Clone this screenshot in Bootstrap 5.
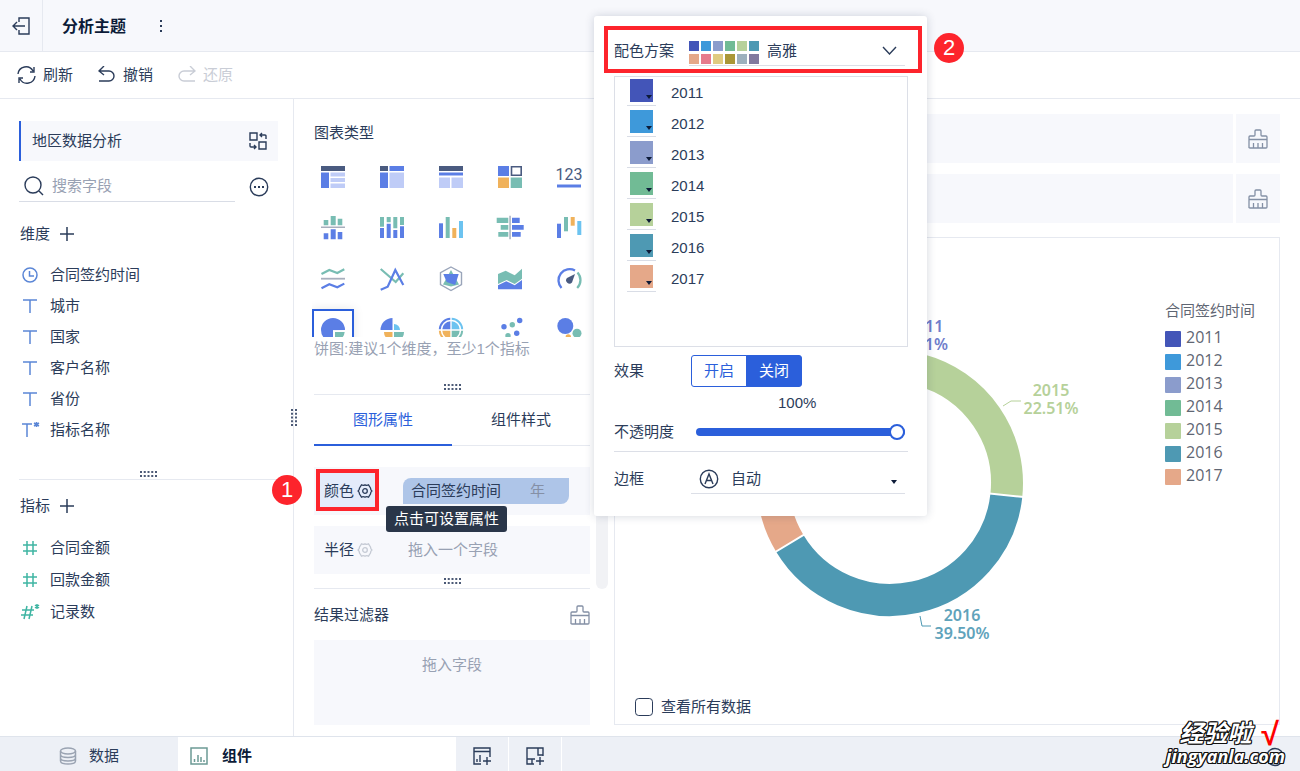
<!DOCTYPE html>
<html lang="zh-CN">
<head>
<meta charset="utf-8">
<meta name="viewport" content="width=device-width, initial-scale=1">
<title>分析主题</title>
<link href="https://cdn.jsdelivr.net/npm/bootstrap@5.3.0/dist/css/bootstrap.min.css" rel="stylesheet">
<style>
:root{--ink:#2b3c5a;--soft:#98a1b3;--line:#e6e9f0;--pale:#f7f8fc;--blue:#2b5fdb;--red:#fd242c}
body{font-family:"Liberation Sans","Noto Sans CJK SC",sans-serif;font-size:15px;line-height:24px;color:var(--ink);background:#fff}
svg{display:block;flex:none}
.ico{fill:none;stroke:currentColor;stroke-width:1.4}
.plain{border:0;background:none;padding:0;color:inherit;display:flex;align-items:center}
.topbar{height:52px;background:var(--pale);border-bottom:1px solid var(--line)}
.topbar .exit{width:43px;height:51px;border-right:1px solid var(--line)}
.topbar h1{font-size:16px;font-weight:700;color:#0c1b38;margin:0 0 0 19px;padding-top:2px}
.toolbar{height:47px;border-bottom:1px solid var(--line);padding-left:17px;gap:25px}
.toolbar .plain{gap:7px}
.toolbar .plain:disabled{color:#c9cdd6}
.side{width:294px;border-right:1px solid var(--line);padding:22px 15px 0 19px}
.dataset{height:40px;background:var(--pale);border-left:2px solid var(--blue);padding:0 11px 0 11px}
.search{height:31px;margin:10px 43px 0 0;border-bottom:1px solid #d9dde6;padding-left:4px}
.search input{border:0;outline:0;padding:0;width:100%;color:var(--ink);background:none}
.search input::placeholder{color:var(--soft)}
.more{right:9px;bottom:5px}
.section{height:32px;margin-top:16px;padding-left:1px;font-size:15px;font-weight:400;gap:10px}
.fields{margin:9px 0 0 3px;padding:0;list-style:none}
.fields li{height:31px;display:flex;align-items:center;gap:12px}
.fields.measures{margin-top:10px}
.fields.measures li{height:32px}
.splitter{border-bottom:1px solid var(--line);display:flex;justify-content:center}
.vgrip{left:291px;top:310px}
.conf{width:320px;padding:22px 24px 11px 20px}
.kinds{display:grid;grid-template-columns:repeat(5,42px);grid-auto-rows:42px;gap:9px 0;justify-content:space-between;margin:11px 0 0 -2px;height:181px;overflow:hidden}
.kinds .plain{justify-content:center}
.kinds .active{border:2px solid var(--blue);box-shadow:0 0 10px #0000001a}
.kinds text{font:16px Roboto,sans-serif;text-anchor:middle}
.tabs{height:51px}
.tabs .plain{flex:1;justify-content:center;border-bottom:1px solid var(--line)}
.tabs .active{color:var(--blue);border-bottom:2px solid var(--blue)}
.well{background:var(--pale)}
.prop{height:48px;padding-left:10px}
.prop .plain{gap:3px}
.hot{left:6px;top:6px;height:34px;width:55px;background:#e4ebfa}
.mark-box{border:4px solid var(--red);pointer-events:none}
.pill{width:166px;height:26px;margin-right:21px;padding:0 24px 0 8px;background:#aec5e8;border-radius:8px 0}
.tip{left:72px;top:39px;height:26px;padding:1px 8px 0;background:#2a3649;color:#fff;border-radius:3px;z-index:3;white-space:nowrap}
.num{width:30px;height:30px;border-radius:50%;background:var(--red);color:#fff;font-size:22px;line-height:30px;text-align:center;z-index:6}
.thumbbar{right:6px;top:200px;width:12px;height:290px;border-radius:6px;background:#f1f2f5}
.view{padding:15px 20px 11px 0}
.axis{height:49px}
.axis .plain{width:47px;justify-content:center;border-left:3px solid #fff;color:#8490a5}
.chart{border:1px solid var(--line);margin-top:14px}
.legend-list{width:114px;padding-top:61px;color:#5f6673}
.legend-list li{height:23px;display:flex;align-items:center;gap:5px;font:16px/23px "Open Sans",sans-serif}
.dot{width:16px;height:16px;border-radius:1px;margin-top:3px}
.pie text{font:600 16px "Noto Sans",sans-serif;text-anchor:middle}
.form-check-input{width:18px;height:18px;border:1px solid var(--ink);margin:0}
.popup{left:594px;top:16px;width:333px;height:500px;background:#fff;border-radius:3px;box-shadow:0 0 10px #1b2a4a30;padding:20px 19px 0 20px;z-index:4}
.lab{width:75px;flex:none}
.scheme{border-bottom:1px solid #dcdfe7;height:30px;margin-right:3px}
.sw{display:grid;grid-template-columns:repeat(6,10px);grid-auto-rows:10px;gap:3px 2px;padding-top:4px}
.popup select{appearance:none;border:0;background:none;color:inherit;padding:0;height:100%;outline:0;width:100%}
.down{right:8px;pointer-events:none}
.colors{margin-top:10px;height:271px;border:1px solid #dcdfe7;padding:0 12px}
.colors li{height:31px;display:flex;align-items:center;gap:15px}
.chip{width:29px;height:27px;border:0;border-bottom:1px solid #d9dde6;padding:0 3px 3px;background:none}
.chip span{display:block;height:23px;position:relative}
.chip span::after,.tri{content:"";position:absolute;right:1px;bottom:3px;border:3px solid transparent;border-top:4px solid #0d1b38;border-bottom:0}
.onoff .btn{--bs-btn-color:var(--blue);--bs-btn-border-color:var(--blue);--bs-btn-active-bg:var(--blue);--bs-btn-active-border-color:var(--blue);--bs-btn-active-color:#fff;height:32px;width:56px;padding:0;font-size:15px;line-height:29px;border-radius:3px}
.slide{appearance:none;width:209px;height:18px;margin:0;background:none}
.slide::-webkit-slider-runnable-track{height:8px;border-radius:4px;background:var(--blue)}
.slide::-webkit-slider-thumb{appearance:none;width:16px;height:16px;margin-top:-4px;border-radius:50%;background:#fff;border:2px solid var(--blue)}
.slide::-moz-range-track{height:8px;border-radius:4px;background:var(--blue)}
.slide::-moz-range-thumb{width:12px;height:12px;border-radius:50%;background:#fff;border:2px solid var(--blue)}
.foot{height:35px;background:#edf0f6;border-top:1px solid #dfe4ec}
.foot .plain{height:34px;padding-top:3px}
.foot .cell{width:53px;justify-content:center;border-right:1px solid #fff}
.stamp{right:15px;bottom:4px;color:#fff;font-weight:700;line-height:22px;font-style:italic;z-index:7;
text-shadow:1px 0 #111,-1px 0 #111,0 1px #111,0 -1px #111,1px 1px #111,-1px -1px #111,1px -1px #111,-1px 1px #111}
.stamp .zh{font-size:24px;display:flex;justify-content:flex-end;gap:8px;padding-right:8px}
.stamp .tick{color:#f00;text-shadow:none;font-size:32px}
.stamp .en{font:italic 700 18px/22px "Open Sans",sans-serif}
</style>
<script src="https://cdn.jsdelivr.net/npm/bootstrap@5.3.0/dist/js/bootstrap.bundle.min.js"></script>
</head>
<body class="d-flex flex-column min-vh-100 position-relative">

<svg width="0" height="0" class="position-absolute" aria-hidden="true">
  <symbol id="brush" viewBox="0 0 20 20"><path d="M1 19V8q0-1 1-1h4q1 0 1-1V2q0-1 1-1h4q1 0 1 1v4q0 1 1 1h4q1 0 1 1v10q0 1-1 1H2q-1 0-1-1M1 10.500h18M5.500 14v5M10 14v5M14.500 14v5" fill="none" stroke="currentColor" stroke-width="1.300"/></symbol>
  <symbol id="tee" viewBox="0 0 16 16"><path d="M1 2h14M8 2v13" fill="none" stroke="#5b86d6" stroke-width="1.500"/></symbol>
  <symbol id="hash" viewBox="0 0 16 16"><path d="M5 1v14M11 1v14M1 5h14M1 11h14" fill="none" stroke="#3fb5a3" stroke-width="1.500"/></symbol>
  <symbol id="plus" viewBox="0 0 14 14"><path d="M7 0v14M0 7h14" stroke="currentColor" stroke-width="1.500"/></symbol>
  <symbol id="gear" viewBox="0 0 16 16"><path d="M4.500 1.800q1.500 1 3.500 0 2 1 3.500 0L13.500 5q0 2 1.500 3-1.500 1-1.500 3l-2 3.200q-1.500-1-3.500 0-2-1-3.500 0L2.500 11Q2.500 9 1 8q1.500-1 1.500-3z" fill="none" stroke="currentColor" stroke-width="1.300" stroke-linejoin="round"/><circle cx="8" cy="8" r="2.300" fill="none" stroke="currentColor" stroke-width="1.300"/></symbol>
  <symbol id="grip" viewBox="0 0 17 6"><path d="M0 1h17M0 5h17" stroke="#4c5a76" stroke-width="2" stroke-dasharray="2 1.750"/></symbol>
</svg>

<header class="topbar d-flex align-items-center">
  <button class="plain exit justify-content-center" aria-label="退出"><svg class="ico" width="18" height="18"><path d="M7 5V1h10v16H7v-4M13 9H1M5 5 1 9l4 4"/></svg></button>
  <h1>分析主题</h1>
  <button class="plain ms-4 ps-2" aria-label="更多"><svg width="6" height="14" fill="currentColor"><path d="M2 1h2v2H2zM2 6h2v2H2zM2 11h2v2H2z"/></svg></button>
</header>

<div class="toolbar d-flex align-items-center">
  <button class="plain"><svg class="ico" width="19" height="18"><path d="M1 8a8 8 0 0 1 15-3M17 1v5h-4M18 10a8 8 0 0 1-15 3M2 17v-5h4"/></svg>刷新</button>
  <button class="plain"><svg class="ico" width="18" height="18"><path d="M6 0 1 5l5 4M1 5h10a5 5 0 0 1 0 10H1"/></svg>撤销</button>
  <button class="plain" disabled><svg class="ico" width="18" height="18"><path d="m12 0 5 5-5 4M17 5H6a5 5 0 0 0 0 10h11"/></svg>还原</button>
</div>

<main class="d-flex flex-grow-1 position-relative">
  <aside class="side">
    <div class="dataset d-flex align-items-center justify-content-between"><span>地区数据分析</span>
      <button class="plain" aria-label="切换"><svg class="ico" width="18" height="18"><path d="M1 1h7v7H1zM10 10h7v7h-7zM17 7V4q0-1-1-1h-5M13 1l-2 2 2 2M1 11v3q0 1 1 1h5M5 13l2 2-2 2"/></svg></button></div>
    <div class="d-flex position-relative">
      <label class="search d-flex align-items-center gap-2 flex-grow-1"><svg class="ico" width="21" height="20"><circle cx="10" cy="9" r="8"/><path d="m16 15 4 4"/></svg><input type="text" placeholder="搜索字段" aria-label="搜索字段"></label>
      <button class="plain position-absolute more" aria-label="筛选"><svg class="ico" width="20" height="20"><circle cx="10" cy="10" r="8.700"/><path d="M5 10h2M9 10h2M13 10h2" stroke-width="2"/></svg></button>
    </div>
    <h2 class="section d-flex align-items-center mb-0">维度<button class="plain" aria-label="添加维度"><svg width="14" height="14"><use href="#plus"/></svg></button></h2>
    <ul class="fields">
      <li><svg width="16" height="16" fill="none" stroke="#5b86d6" stroke-width="1.500"><circle cx="8" cy="8" r="7"/><path d="M7.500 4v5H12"/></svg>合同签约时间</li>
      <li><svg width="16" height="16"><use href="#tee"/></svg>城市</li>
      <li><svg width="16" height="16"><use href="#tee"/></svg>国家</li>
      <li><svg width="16" height="16"><use href="#tee"/></svg>客户名称</li>
      <li><svg width="16" height="16"><use href="#tee"/></svg>省份</li>
      <li><svg width="16" height="16" overflow="visible" fill="none" stroke="#5b86d6" stroke-width="1.500"><path d="M0 2h10M5 2v13M14.500 0v5M12 1l5 3M17 1l-5 3" /></svg>指标名称</li>
    </ul>
    <div class="splitter" style="height:9px;margin-top:26px"><svg width="17" height="6"><use href="#grip"/></svg></div>
    <h2 class="section d-flex align-items-center mb-0" style="margin-top:10px">指标<button class="plain" aria-label="添加指标"><svg width="14" height="14"><use href="#plus"/></svg></button></h2>
    <ul class="fields measures">
      <li><svg width="16" height="16"><use href="#hash"/></svg>合同金额</li>
      <li><svg width="16" height="16"><use href="#hash"/></svg>回款金额</li>
      <li><svg width="16" height="16" overflow="visible" fill="none" stroke="#3fb5a3" stroke-width="1.500"><path d="M5 2 2 15M10 2 7 15M0 6h12M-1 11h12M15 0v5M13 1l4 3M17 1l-4 3"/></svg>记录数</li>
    </ul>
  </aside>
  <svg class="vgrip position-absolute" width="6" height="17"><path d="M1 0v17M5 0v17" stroke="#4c5a76" stroke-width="2" stroke-dasharray="2 1.750"/></svg>

  <section class="conf d-flex flex-column position-relative flex-shrink-0">
    <div class="thumbbar position-absolute"></div>
    <div>图表类型</div>
    <div class="kinds">
      <button class="plain" aria-label="分组表"><svg width="28" height="28" viewBox="-2 -3 28 28"><path fill="#4a5b80" d="M0 0h24v5H0z"/><path fill="#5b7ee5" d="M0 6.500h8V22H0z"/><path fill="#bfccf7" d="M9.500 6.500H24v4H9.500zM9.500 12H24v4H9.500zM9.500 17.500H24V22H9.500z"/></svg></button>
      <button class="plain" aria-label="交叉表"><svg width="28" height="28" viewBox="-2 -3 28 28"><path fill="#4a5b80" d="M0 0h8v5H0z"/><path fill="#5b7ee5" d="M9.500 0H24v5H9.500zM0 6.500h8V22H0z"/><path fill="#bfccf7" d="M9.500 6.500H24V22H9.500z"/></svg></button>
      <button class="plain" aria-label="明细表"><svg width="28" height="28" viewBox="-2 -3 28 28"><path fill="#4a5b80" d="M0 0h24v5H0z"/><path fill="#5b7ee5" d="M0 6.500h24v3H0z"/><path fill="#bfccf7" d="M0 11.500h11V22H0zM12.500 11.500H24V22H12.500z"/></svg></button>
      <button class="plain" aria-label="颜色表格"><svg width="28" height="28" viewBox="-2 -3 28 28"><path fill="#5b7ee5" d="M0 0h11v10H0z"/><path fill="none" stroke="#4a5b80" stroke-width="1.600" d="M13.500.800h9.700v8.400h-9.700z"/><path fill="#f0b25b" d="M0 11.500h11V22H0z"/><path fill="#78bdb3" d="M12.700 11.500H24V22H12.700z"/></svg></button>
      <button class="plain" aria-label="指标卡"><svg width="28" height="28" viewBox="-2 -3 28 28"><text x="12" y="14" fill="#4a5b80">123</text><path fill="#5b7ee5" d="M0 18.500h24v3H0z"/></svg></button>

      <button class="plain" aria-label="堆积柱形图"><svg width="28" height="28" viewBox="-2 -3 28 28"><path fill="#78bdb3" d="M2.700 3h4.600v5.300H2.700zM9.700-1h5v9.300h-5zM16.700 1.700h4.600v6.600h-4.600z"/><path fill="#a8afbd" d="M0 9.500h24V11H0z"/><path fill="#5b7ee5" d="M2.700 16.300h4.600v6H2.700zM9.700 12.300h5v10h-5zM16.700 15h4.600v7.300h-4.600z"/></svg></button>
      <button class="plain" aria-label="百分比柱形图"><svg width="28" height="28" viewBox="-2 -3 28 28"><path fill="#78bdb3" d="M0 0h4v9.700H0zM6.700 0h4v5.200h-4zM13.300 0h4v11.300h-4zM20 0h4v8h-4z"/><path fill="#5b7ee5" d="M0 11h4v10H0zM6.700 6.700h4V21h-4zM13.300 13h4v8h-4zM20 9.300h4V21h-4z"/></svg></button>
      <button class="plain" aria-label="多系列柱形图"><svg width="28" height="28" viewBox="-2 -3 28 28"><path fill="#5b7ee5" d="M0 6.300h4V21H0z"/><path fill="#78bdb3" d="M6.700 0h4v21h-4z"/><path fill="#f0b25b" d="M13.300 11h4v10h-4z"/><path fill="#6cc3f0" d="M20 4h4v17h-4z"/></svg></button>
      <button class="plain" aria-label="对比条形图"><svg width="28" height="28" viewBox="-2 -3 28 28"><path fill="#78bdb3" d="M-1.300.700h11.600V6H-1.300zM2.700 8h7.600v4.700H2.700zM.300 15h10v4.700H.300z"/><path fill="#a8afbd" d="M11.300-1.300h1.500v23.600h-1.500z"/><path fill="#5b7ee5" d="M14 .700h7.700V6H14zM14 8h11.700v4.700H14zM14 15h8.700v4.700H14z"/></svg></button>
      <button class="plain" aria-label="瀑布图"><svg width="28" height="28" viewBox="-2 -3 28 28"><path fill="#5b7ee5" d="M0 6.700h4V21H0z"/><path fill="#78bdb3" d="M7 0h4v14.300H7z"/><path fill="#f0b25b" d="M13.700 0h4v8.700h-4z"/><path fill="#6cc3f0" d="M20.300 4h4v14h-4z"/></svg></button>

      <button class="plain" aria-label="范围面积图"><svg width="28" height="28" viewBox="-2 -3 28 28" fill="none" stroke-width="2.200"><path stroke="#78bdb3" d="m.500 6 7.800-4 8 3 7-3.700"/><path stroke="#a8afbd" stroke-width="1.800" d="M0 10.700h24"/><path stroke="#5b7ee5" d="m.500 20.300 7.800-4 8 3 7-3.700"/></svg></button>
      <button class="plain" aria-label="折线图"><svg width="28" height="28" viewBox="-2 -3 28 28" fill="none" stroke-width="2.200"><path stroke="#78bdb3" d="m.700 1 15 13 7.600-8.700"/><path stroke="#5b7ee5" d="m.700 21.700 7-3L15.300 2l8 15"/></svg></button>
      <button class="plain" aria-label="雷达图"><svg width="28" height="28" viewBox="-2 -3 28 28"><path fill="none" stroke="#9aa5ba" stroke-width="1.400" d="m12-1 10.500 5.700v12L12 22.500 1.500 16.700v-12z"/><path fill="#78bdb3" d="m12 2 8 14.500-8 2-8-2z"/><path fill="#5b7ee5" d="M4.300 6h15.400l-3.500 11-8.500-3z"/></svg></button>
      <button class="plain" aria-label="面积图"><svg width="28" height="28" viewBox="-2 -3 28 28"><path fill="#78bdb3" d="m0 6 7.700-3.300 9 4.600L24 .700v10L16.700 16 8.700 12 0 16z"/><path fill="#5b7ee5" d="m0 17.300 8.300-4 8.400 4L24 12v9.300H0z"/></svg></button>
      <button class="plain" aria-label="仪表盘"><svg width="28" height="28" viewBox="-2 -3 28 28"><g fill="none" stroke-width="2.300"><path stroke="#5b7ee5" d="M4.500 20A11.200 11.200 0 0 1 18 2.500"/><path stroke="#78bdb3" d="M20.500 4.500a11.200 11.200 0 0 1-.300 15.500"/></g><path fill="#4a5b80" d="m18 6-3 8.500A3.200 3.200 0 1 1 10 10z"/></svg></button>

      <button class="plain active" aria-label="饼图" aria-pressed="true"><svg width="28" height="28" viewBox="-2 -3 28 28"><path fill="#5b7ee5" d="M24 11a12 12 0 1 0-12 12V11.500z"/><path fill="#fff" d="M12 11.200h12V23H12z"/><path fill="#78bdb3" d="M14 13h9.700A10 10 0 0 1 14 22z"/></svg></button>
      <button class="plain" aria-label="玫瑰图"><svg width="28" height="28" viewBox="-2 -3 28 28"><path fill="#5b7ee5" d="M12.500 11V-1A12 12 0 0 0 .500 11z"/><path fill="#6cc3f0" d="M14 11V5a6 6 0 0 1 6 6z"/><path fill="#f0b25b" d="M12.500 13v9a9 9 0 0 1-8.500-9z"/><path fill="#78bdb3" d="M14 13v10a10 10 0 0 0 10-10z"/></svg></button>
      <button class="plain" aria-label="多层饼图"><svg width="28" height="28" viewBox="-2 -3 28 28"><path fill="#5b7ee5" d="M11.300 10.300v-8a8.500 8.500 0 0 0-8 8z"/><path fill="#6cc3f0" d="M12.700 10.300v-8a8.500 8.500 0 0 1 8 8z"/><path fill="#f0b25b" d="M11.300 11.700v8a8.500 8.500 0 0 1-8-8z"/><path fill="#78bdb3" d="M12.700 11.700v8a8.500 8.500 0 0 0 8-8z"/><g fill="none" stroke-width="2"><path stroke="#5b7ee5" d="M.800 10.300A11 11 0 0 1 11.300-.200"/><path stroke="#6cc3f0" d="M12.700-.200a11 11 0 0 1 10.500 10.500"/><path stroke="#f0b25b" d="M.800 11.700a11 11 0 0 0 10.500 10.500"/><path stroke="#78bdb3" d="M23.200 11.700a11 11 0 0 1-10.500 10.500"/></g></svg></button>
      <button class="plain" aria-label="散点图"><svg width="28" height="28" viewBox="-2 -3 28 28"><g fill="#5b7ee5"><circle cx="21.700" cy="1.500" r="2.700"/><circle cx="6" cy="7.700" r="2.700"/><circle cx="18.700" cy="14.300" r="2.700"/></g><g fill="#78bdb3"><circle cx="14.300" cy="5.700" r="2.700"/><circle cx="10" cy="16.700" r="2.700"/></g></svg></button>
      <button class="plain" aria-label="气泡图"><svg width="28" height="28" viewBox="-2 -3 28 28"><circle cx="8.300" cy="7" r="8" fill="#5b7ee5"/><circle cx="20" cy="14.300" r="4.500" fill="#78bdb3"/><circle cx="11.300" cy="18" r="2.700" fill="#f0b25b"/></svg></button>
    </div>
    <div class="text-nowrap" style="color:var(--soft);height:22px">饼图:建议1个维度，至少1个指标</div>
    <div class="splitter" style="height:11px;margin-top:25px"><svg width="17" height="6"><use href="#grip"/></svg></div>
    <nav class="tabs d-flex" aria-label="组件设置">
      <button class="plain active">图形属性</button><button class="plain">组件样式</button>
    </nav>
    <div class="well prop d-flex align-items-center position-relative" style="margin-top:21px">
      <div class="hot position-absolute"></div>
      <button class="plain position-relative">颜色<svg width="16" height="16"><use href="#gear"/></svg></button>
      <div class="pill d-flex align-items-center justify-content-between ms-auto"><span>合同签约时间</span><span style="color:#8590a6">年</span></div>
      <div class="mark-box position-absolute" style="left:2px;top:2px;width:63px;height:42px"></div>
      <div class="tip position-absolute" role="tooltip">点击可设置属性</div>
      <div class="num position-absolute" style="left:-42px;top:8px">1</div>
    </div>
    <div class="well prop d-flex align-items-center" style="margin-top:11px">
      <button class="plain">半径<svg width="16" height="16" style="color:#c5cad4"><use href="#gear"/></svg></button>
      <span style="color:var(--soft);margin-left:35px">拖入一个字段</span>
    </div>
    <div class="splitter" style="height:15px;padding-top:4px"><svg width="17" height="6"><use href="#grip"/></svg></div>
    <div class="d-flex align-items-center justify-content-between" style="height:51px"><span>结果过滤器</span><button class="plain" aria-label="清空" style="color:#8490a5"><svg width="20" height="20"><use href="#brush"/></svg></button></div>
    <div class="well flex-grow-1 text-center" style="color:var(--soft);padding-top:13px">拖入字段</div>
  </section>

  <section class="view d-flex flex-column flex-grow-1">
    <div class="well axis d-flex justify-content-end"><button class="plain" aria-label="清空横轴"><svg width="20" height="20"><use href="#brush"/></svg></button></div>
    <div class="well axis d-flex justify-content-end" style="margin-top:11px"><button class="plain" aria-label="清空纵轴"><svg width="20" height="20"><use href="#brush"/></svg></button></div>
    <div class="chart d-flex flex-column flex-grow-1">
      <div class="d-flex flex-grow-1">
        <div class="flex-grow-1 d-flex justify-content-center" style="padding-top:62px">
          <svg class="pie" width="420" height="360" viewBox="680 300 420 360">
            <g fill="none" stroke-width="32" id="ring"></g>
            <g stroke="#fff" stroke-width="2"><path d="m980 492.500 44 4.600M814 528.700 772 554M914 392l12-44"/></g>
            <g fill="none" stroke-width="1"><path stroke="#b6d19a" d="m1003 406 8-5h10"/><path stroke="#4e99b3" d="m920 616 2 10h9"/></g>
            <g fill="#6f7ecb"><text x="925" y="332">2011</text><text x="925" y="350">3.01%</text></g>
            <g fill="#b6d19a"><text x="1051" y="396">2015</text><text x="1051" y="414">22.51%</text></g>
            <g fill="#5fa3bb"><text x="962" y="621">2016</text><text x="962" y="639">39.50%</text></g>
          </svg>
        </div>
        <div class="legend-list"><div class="text-nowrap">合同签约时间</div>
          <ul class="list-unstyled mb-0" id="legend" style="margin-top:3px"></ul></div>
      </div>
      <label class="d-flex align-items-center gap-2" style="padding:0 0 5px 20px"><input class="form-check-input" type="checkbox">查看所有数据</label>
    </div>
  </section>
</main>

<footer class="foot d-flex position-relative">
  <button class="plain justify-content-center" style="width:178px;gap:12px"><svg width="18" height="18" fill="none" stroke="#9aa3b2" stroke-width="1.500"><ellipse cx="9" cy="4" rx="7.500" ry="3"/><path d="M1.500 4v10c0 4 15 4 15 0V4M1.500 7.500c0 4 15 4 15 0M1.500 11c0 4 15 4 15 0"/></svg>数据</button>
  <button class="plain bg-white fw-bold" style="width:278px;gap:14px;padding-left:12px;color:#0c1b38"><svg width="18" height="18" fill="none" stroke="#6c9a95" stroke-width="1.500"><path d="M1 1h16v16H1zM4.500 15v-3M8 15V8M11 15v-5M14 15v-2"/></svg>组件</button>
  <button class="plain cell" aria-label="添加组件"><svg class="ico" width="18" height="18"><path d="M8 17H1V1h16v9M1 4.500h16M4 15v-3M7 15V8M10 14h8M14 10v8"/></svg></button>
  <button class="plain cell" aria-label="添加仪表板"><svg class="ico" width="18" height="18"><path d="M8 17H1V1h16v8M12 1v7h5M1 12h8M6 12v5M10 14h8M14 10v8"/></svg></button>
  <svg class="position-absolute" style="right:15px;bottom:4px" width="20" height="20" fill="none" stroke="#2b3c5a" stroke-width="1.500"><circle cx="10" cy="10" r="8.500"/></svg>
</footer>

<div class="popup position-absolute">
  <div class="d-flex align-items-center"><label class="lab" for="scheme">配色方案</label>
    <div class="scheme d-flex align-items-center flex-grow-1 position-relative gap-2">
      <div class="sw" id="swatches"></div>
      <select id="scheme"><option>高雅</option></select>
      <svg class="ico down position-absolute" width="15" height="9"><path d="m1 1 6.500 7L14 1"/></svg>
    </div></div>
  <ul class="colors list-unstyled mb-0" id="colors"></ul>
  <div class="d-flex align-items-center" style="margin-top:8px"><span class="lab" style="width:77px">效果</span>
    <div class="btn-group onoff" role="group" aria-label="效果">
      <input type="radio" class="btn-check" name="fx" id="on"><label class="btn btn-outline-primary" for="on">开启</label>
      <input type="radio" class="btn-check" name="fx" id="off" checked><label class="btn btn-outline-primary" for="off">关闭</label>
    </div></div>
  <div style="padding:4px 0 0 164px;height:26px">100%</div>
  <div class="d-flex align-items-center" style="height:39px;border-bottom:1px solid #dcdfe7"><label class="lab" style="width:82px" for="alpha">不透明度</label><input id="alpha" class="slide" type="range" value="100"></div>
  <div class="d-flex align-items-center" style="margin-top:12px"><label class="lab" style="width:77px" for="edge">边框</label>
    <div class="scheme d-flex align-items-center flex-grow-1 position-relative ps-2" style="gap:12px">
      <svg class="ico" width="20" height="20"><circle cx="10" cy="10" r="8.700"/><path d="m6 15 4-10 4 10M7.500 11.500h5"/></svg>
      <select id="edge"><option>自动</option></select><i class="tri" style="right:8px;bottom:9px"></i>
    </div></div>
  <div class="mark-box position-absolute" style="left:10px;top:10px;width:318px;height:47px"></div>
  <div class="num position-absolute" style="left:340px;top:17px">2</div>
</div>

<div class="stamp position-absolute text-end"><div class="zh"><span>经验啦</span><span class="tick">√</span></div><div class="en">jingyanla.com</div></div>

<script>
const palette=['#4355b8','#3e99da','#8b9ccc','#71bb95','#b6d19a','#4e99b3','#e5a889','#e67b8c','#e0cb80','#aa9737','#9db0bd','#81799e'];
const years=[2011,2012,2013,2014,2015,2016,2017];
document.getElementById('swatches').innerHTML=palette.map(c=>`<span style="background:${c}"></span>`).join('');
document.getElementById('colors').innerHTML=years.map((y,i)=>`<li><button class="chip" aria-label="${y}"><span style="background:${palette[i]}"></span></button>${y}</li>`).join('');
document.getElementById('legend').innerHTML=years.map((y,i)=>`<li><span class="dot" style="background:${palette[i]}"></span>${y}</li>`).join('');
// ring slices: colour index, start and end angle in degrees
const slices=[[4,-75,6],[5,6,149],[6,149,215],[3,215,235],[2,235,255],[1,255,272],[0,272,285]];
const pt=a=>`${890+117*Math.cos(a*Math.PI/180)} ${483+117*Math.sin(a*Math.PI/180)}`;
document.getElementById('ring').innerHTML=slices.map(([i,a,b])=>`<path stroke="${palette[i]}" d="M${pt(a)}A117 117 0 0 1 ${pt(b)}"/>`).join('');
</script>
</body>
</html>
